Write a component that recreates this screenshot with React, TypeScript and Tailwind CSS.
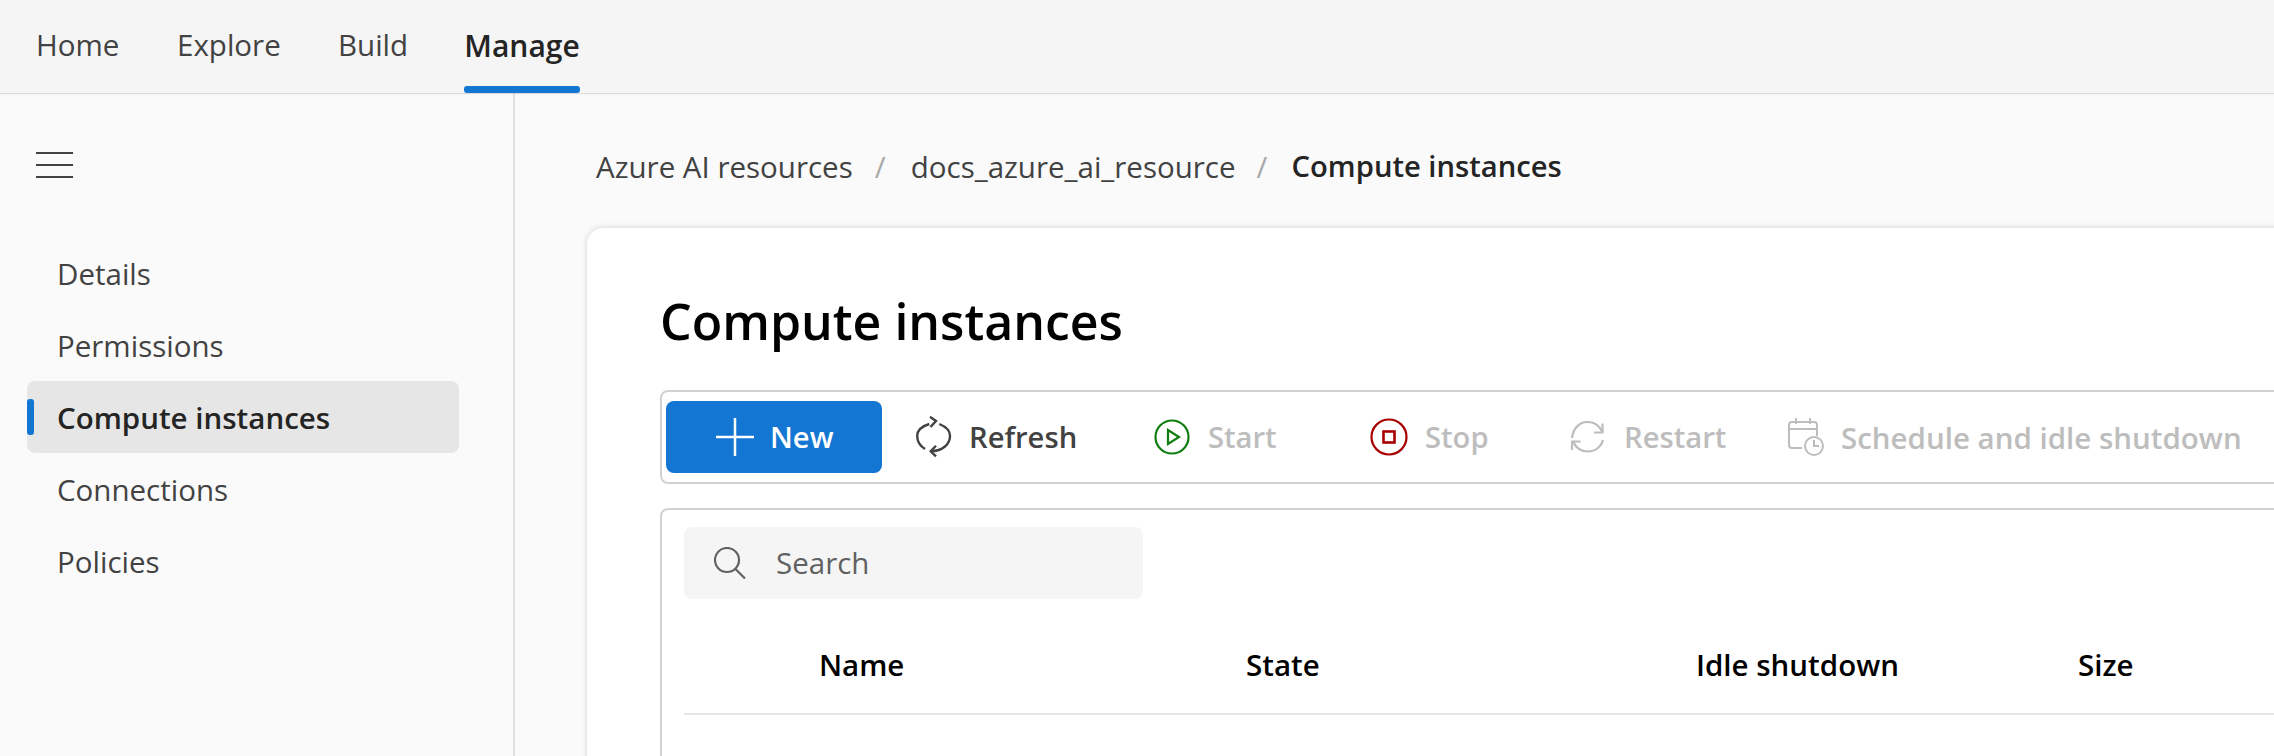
const navItems = [
  { label: 'Home', className: 'ml-[36px] w-[141px]' },
  { label: 'Explore', className: 'w-[161px]' },
  { label: 'Build', className: 'w-[126px]' },
]

const sideItems = ['Details', 'Permissions', 'Compute instances', 'Connections', 'Policies']

function Hamburger() {
  return (
    <svg width="37" height="26" viewBox="0 0 37 26" fill="none" stroke="#424242" strokeWidth="2">
      <path d="M0 1h37M0 13h37M0 25h37" />
    </svg>
  )
}

function PlusIcon() {
  return (
    <svg width="38" height="38" viewBox="0 0 38 38" fill="none" stroke="#fff" strokeWidth="2.5">
      <path d="M19 0v38M0 19h38" />
    </svg>
  )
}

function RefreshIcon() {
  return (
    <svg width="36" height="42" viewBox="0 0 36 42" fill="none" stroke="#424242" strokeWidth="2.4">
      <path d="M13.300 8C5 10.500 1.200 14 1.200 20c0 5 3 10 7.800 13" />
      <path d="M23.300 8c6.200 2.500 10.700 7 10.700 12 0 8-7 15-19.300 15.300" />
      <path d="M14 .8l6 4.200-5.500 6M20 29.700l-5.300 5.600 5.300 5" />
    </svg>
  )
}

function StartIcon() {
  return (
    <svg width="36" height="36" viewBox="0 0 36 36" fill="none" stroke="#107c10" strokeWidth="2.2">
      <circle cx="18" cy="18" r="16.500" />
      <path d="M14 11v14l11-7z" />
    </svg>
  )
}

function StopIcon() {
  return (
    <svg width="38" height="38" viewBox="0 0 38 38" fill="none" stroke="#a80000" strokeWidth="2.2">
      <circle cx="19" cy="19" r="17.500" />
      <rect x="13.500" y="13.500" width="11" height="11" strokeWidth="2.600" />
    </svg>
  )
}

function RestartIcon() {
  return (
    <svg width="34" height="32" viewBox="0 0 34 32" fill="none" stroke="#bdbdbd" strokeWidth="2.2">
      <path d="M1 17C2 8 8 1 16.500 1 23 1 28 4 31.500 11" />
      <path d="M32 19c-1.500 6-7 11.500-15.500 11.500C10 30.500 5 27 2 20.500" />
      <path d="M31.500 2.500v9H23M1 29v-8.500h8.500" />
    </svg>
  )
}

function ScheduleIcon() {
  return (
    <svg width="36" height="38" viewBox="0 0 36 38" fill="none" stroke="#bdbdbd" strokeWidth="2">
      <path d="M14 30H4a3 3 0 0 1-3-3V7a3 3 0 0 1 3-3h22a3 3 0 0 1 3 3v11" />
      <path d="M1 11h28M8 0v6M22 0v6" />
      <circle cx="26" cy="28" r="9" />
      <path d="M26 22v6h5" />
    </svg>
  )
}

function SearchIcon() {
  return (
    <svg width="32" height="32" viewBox="0 0 32 32" fill="none" stroke="#616161" strokeWidth="2.2">
      <circle cx="13" cy="13" r="12" />
      <path d="M21.500 22l9.500 9.500" />
    </svg>
  )
}

export default function App() {
  return (
    <div className="flex h-[756px] w-[2274px] flex-col overflow-hidden bg-[#fafafa] font-['Open_Sans',sans-serif] text-[29.5px] text-[#424242]">
      <header className="relative z-10 flex h-[93px] shrink-0 items-center bg-[#f5f5f5] pb-[2px] shadow-[0_1px_1px_rgba(0,0,0,0.12)]">
        {navItems.map((item) => (
          <span key={item.label} className={item.className}>
            {item.label}
          </span>
        ))}
        <span className="relative flex h-[91px] w-[116px] items-center justify-center text-[30px] font-semibold text-[#242424]">
          Manage
          <span className="absolute right-0 bottom-[-2px] left-0 h-[7px] rounded-[3px] bg-[#1276d2]" />
        </span>
      </header>

      <div className="flex min-h-0 flex-1">
        <aside className="w-[515px] shrink-0 border-r-2 border-[#e0e0e0] pt-[59px]">
          <div className="ml-[36px] h-[28px]">
            <Hamburger />
          </div>
          <nav className="mt-[57px] flex w-[459px] flex-col pl-[27px]">
            {sideItems.map((item) =>
              item === 'Compute instances' ? (
                <div
                  key={item}
                  className="relative flex h-[72px] items-center rounded-[8px] bg-[#e6e6e6] pt-[2px] pl-[30px] font-semibold text-[#242424]"
                >
                  <span className="absolute top-[18px] left-0 h-[36px] w-[7px] rounded-[3px] bg-[#1276d2]" />
                  {item}
                </div>
              ) : (
                <div key={item} className="flex h-[72px] items-center pt-[2px] pl-[30px]">
                  {item}
                </div>
              ),
            )}
          </nav>
        </aside>

        <main className="min-w-0 flex-1 pl-[72px]">
          <div className="flex h-[135px] items-center pt-[13px] pl-[9px]">
            <span>Azure AI resources</span>
            <span className="ml-[22px] w-[36px] text-[#a8a8a8]">/</span>
            <span>docs_azure_ai_resource</span>
            <span className="ml-[21px] w-[35px] text-[#a8a8a8]">/</span>
            <span className="text-[29.2px] font-semibold text-[#242424]">Compute instances</span>
          </div>

          <section className="h-[600px] w-[1800px] rounded-tl-[16px] bg-white pt-[62px] pl-[73px] shadow-[0_0_6px_rgba(0,0,0,0.16)]">
            <h1 className="h-[100px] text-[50px] leading-[62px] font-semibold text-black">Compute instances</h1>

            <div className="flex h-[94px] w-[1700px] items-center rounded-[8px] border-2 border-[#d1d1d1] pl-[4px] text-[29.2px] font-semibold">
              <button className="flex h-[72px] w-[216px] items-center rounded-[8px] bg-[#1276d2] pl-[50px] text-white">
                <PlusIcon />
                <span className="ml-[16px] pt-[2px]">New</span>
              </button>
              <span className="ml-[34px] flex w-[238px] items-center text-[#424242]">
                <RefreshIcon />
                <span className="ml-[17px] pt-[2px]">Refresh</span>
              </span>
              <div className="flex items-center text-[#bdbdbd]">
                <span className="flex w-[216px] items-center">
                  <StartIcon />
                  <span className="ml-[18px] pt-[2px]">Start</span>
                </span>
                <span className="flex w-[200px] items-center">
                  <StopIcon />
                  <span className="ml-[17px] pt-[2px]">Stop</span>
                </span>
                <span className="flex w-[218px] items-center pl-[1px]">
                  <RestartIcon />
                  <span className="ml-[19px] pt-[2px]">Restart</span>
                </span>
                <span className="flex items-center whitespace-nowrap">
                  <ScheduleIcon />
                  <span className="ml-[17px] pt-[2px] text-[29.5px]">Schedule and idle shutdown</span>
                </span>
              </div>
            </div>

            <div className="mt-[24px] h-[400px] w-[1700px] rounded-[8px] border-2 border-[#d1d1d1] pt-[17px] pl-[22px]">
              <div className="flex h-[72px] w-[459px] items-center rounded-[8px] bg-[#f5f5f5] pl-[30px] text-[#616161]">
                <SearchIcon />
                <span className="ml-[30px]">Search</span>
              </div>
              <div className="mt-[22px] flex h-[94px] items-center border-b-2 border-[#e6e6e6] pb-[4px] font-semibold text-black">
                <span className="ml-[135px] w-[427px]">Name</span>
                <span className="w-[450px]">State</span>
                <span className="w-[382px]">Idle shutdown</span>
                <span>Size</span>
              </div>
            </div>
          </section>
        </main>
      </div>
    </div>
  )
}
